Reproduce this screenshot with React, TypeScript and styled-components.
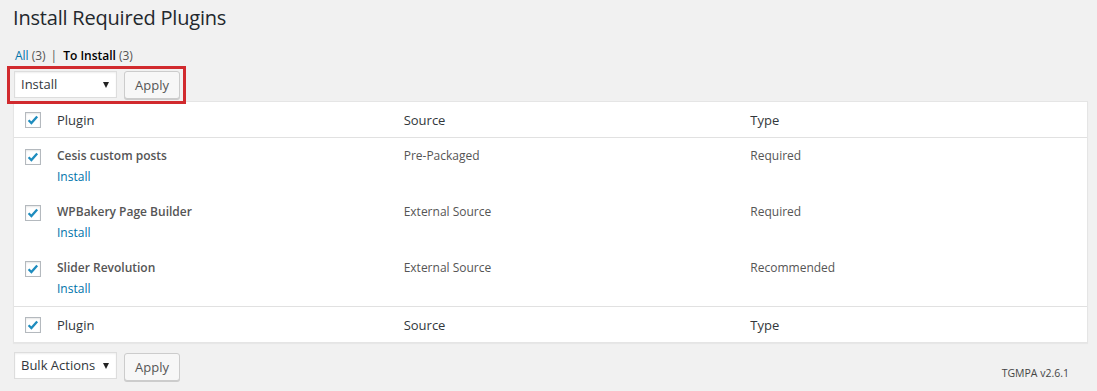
import React from "react";
import styled, { createGlobalStyle } from "styled-components";

const GlobalStyle = createGlobalStyle`
  html, body { margin: 0; padding: 0; background: #f1f1f1; }
  body {
    font-family: "Open Sans", "Noto Sans", Arial, sans-serif;
    color: #444;
    font-size: 13px;
  }
  * { box-sizing: border-box; }
`;

const Wrap = styled.div`
  padding: 3px 9px 0 13px;
  width: 1097px;
  height: 391px;
  overflow: hidden;
`;

const Title = styled.h1`
  margin: 0;
  font-size: 20px;
  line-height: 29px;
  font-weight: 400;
  color: #23282d;
  letter-spacing: -0.2px;
`;

const Views = styled.ul`
  list-style: none;
  margin: 15px 0 0 2px;
  padding: 0;
  display: flex;
  align-items: center;
  font-size: 12px;
  line-height: 18px;
  color: #666;
`;

const ViewItem = styled.li`
  display: flex;
  gap: 3px;
`;

const ViewLink = styled.a<{ $current?: boolean }>`
  color: ${(p) => (p.$current ? "#000" : "#0073aa")};
  font-weight: ${(p) => (p.$current ? 600 : 400)};
  text-decoration: none;
`;

const Count = styled.span`
  color: #555;
`;

const Sep = styled.span`
  margin: 0 6px 0 5px;
  color: #555;
`;

const Highlight = styled.div`
  position: relative;
  z-index: 1;
  display: inline-flex;
  align-items: center;
  gap: 7px;
  margin: 1px 0 0 -6px;
  border: 3px solid #d12a2e;
  padding: 1px 3px 2px 4px;
`;

const SelectBox = styled.div`
  position: relative;
  width: 103px;
  height: 27px;
  background: #fff;
  border: 1px solid #ddd;
  box-shadow: inset 0 1px 2px rgba(0, 0, 0, 0.07);
  color: #32373c;
  font-size: 13px;
  line-height: 25px;
  padding-left: 6px;
`;

const Arrow = styled.span`
  position: absolute;
  right: 7px;
  top: 10px;
  width: 0;
  height: 0;
  border-left: 3.5px solid transparent;
  border-right: 3.5px solid transparent;
  border-top: 6px solid #222;
`;

const Button = styled.button`
  height: 28px;
  width: 56px;
  padding: 0;
  border: 1px solid #ccc;
  border-radius: 3px;
  background: #f7f7f7;
  box-shadow: 0 1px 0 #ccc;
  color: #555;
  font-family: inherit;
  font-size: 13px;
  line-height: 26px;
  margin-top: 1px;
`;

const Table = styled.div`
  position: relative;
  margin-top: -3px;
  background: #fff;
  border: 1px solid #e5e5e5;
  box-shadow: 0 1px 1px rgba(0, 0, 0, 0.04);
`;

const Row = styled.div<{ $head?: "top" | "bottom" }>`
  display: grid;
  grid-template-columns: 33px 1fr 1fr 1fr;
  height: ${(p) => (p.$head ? "36px" : "56px")};
  border-bottom: ${(p) => (p.$head === "top" ? "1px solid #e1e1e1" : "none")};
  border-top: ${(p) => (p.$head === "bottom" ? "1px solid #e1e1e1" : "none")};
`;

const CheckCell = styled.div<{ $head?: boolean }>`
  padding: ${(p) => (p.$head ? "10px" : "11px")} 0 0 11px;
`;

const Cell = styled.div<{ $head?: boolean }>`
  padding: 8px 10px 0;
  font-size: ${(p) => (p.$head ? "13px" : "12px")};
  line-height: 20px;
  color: ${(p) => (p.$head ? "#32373c" : "#555")};
`;

const Name = styled.strong`
  display: block;
  font-weight: 600;
  color: #555;
`;

const RowAction = styled.a`
  display: block;
  padding-top: 2px;
  line-height: 18px;
  color: #0073aa;
  text-decoration: none;
`;

const Box = styled.span`
  display: block;
  width: 16px;
  height: 16px;
  border: 1px solid #b4b9be;
  background: #fff;
  box-shadow: inset 0 1px 2px rgba(0, 0, 0, 0.1);
  svg { display: block; }
`;

const Bottom = styled.div`
  display: flex;
  justify-content: space-between;
  align-items: flex-start;
  margin-top: 9px;
`;

const Actions = styled.div`
  display: flex;
  gap: 7px;
  margin-left: 1px;
`;

const Version = styled.p`
  margin: 13px 19px 0 0;
  font-size: 10.5px;
  line-height: 16px;
  color: #444;
`;

const Check = () => (
  <Box>
    <svg width="14" height="14" viewBox="0 0 14 14">
      <path d="M2.6 7.2 L5.4 10 L11.2 3.4" fill="none" stroke="#1e8cbe" strokeWidth="2.3" />
    </svg>
  </Box>
);

const plugins = [
  { name: "Cesis custom posts", source: "Pre-Packaged", type: "Required" },
  { name: "WPBakery Page Builder", source: "External Source", type: "Required" },
  { name: "Slider Revolution", source: "External Source", type: "Recommended" },
];

export default function App() {
  return (
    <>
      <GlobalStyle />
      <Wrap>
        <Title>Install Required Plugins</Title>
        <Views>
          <ViewItem>
            <ViewLink>All</ViewLink>
            <Count>(3)</Count>
          </ViewItem>
          <Sep>|</Sep>
          <ViewItem>
            <ViewLink $current>To Install</ViewLink>
            <Count>(3)</Count>
          </ViewItem>
        </Views>
        <Highlight>
          <SelectBox>
            Install
            <Arrow />
          </SelectBox>
          <Button>Apply</Button>
        </Highlight>
        <Table>
          <Row $head="top">
            <CheckCell $head>
              <Check />
            </CheckCell>
            <Cell $head>Plugin</Cell>
            <Cell $head>Source</Cell>
            <Cell $head>Type</Cell>
          </Row>
          {plugins.map((p) => (
            <Row key={p.name}>
              <CheckCell>
                <Check />
              </CheckCell>
              <Cell>
                <Name>{p.name}</Name>
                <RowAction>Install</RowAction>
              </Cell>
              <Cell>{p.source}</Cell>
              <Cell>{p.type}</Cell>
            </Row>
          ))}
          <Row $head="bottom">
            <CheckCell $head>
              <Check />
            </CheckCell>
            <Cell $head>Plugin</Cell>
            <Cell $head>Source</Cell>
            <Cell $head>Type</Cell>
          </Row>
        </Table>
        <Bottom>
          <Actions>
            <SelectBox>
              Bulk Actions
              <Arrow />
            </SelectBox>
            <Button>Apply</Button>
          </Actions>
          <Version>TGMPA v2.6.1</Version>
        </Bottom>
      </Wrap>
    </>
  );
}
